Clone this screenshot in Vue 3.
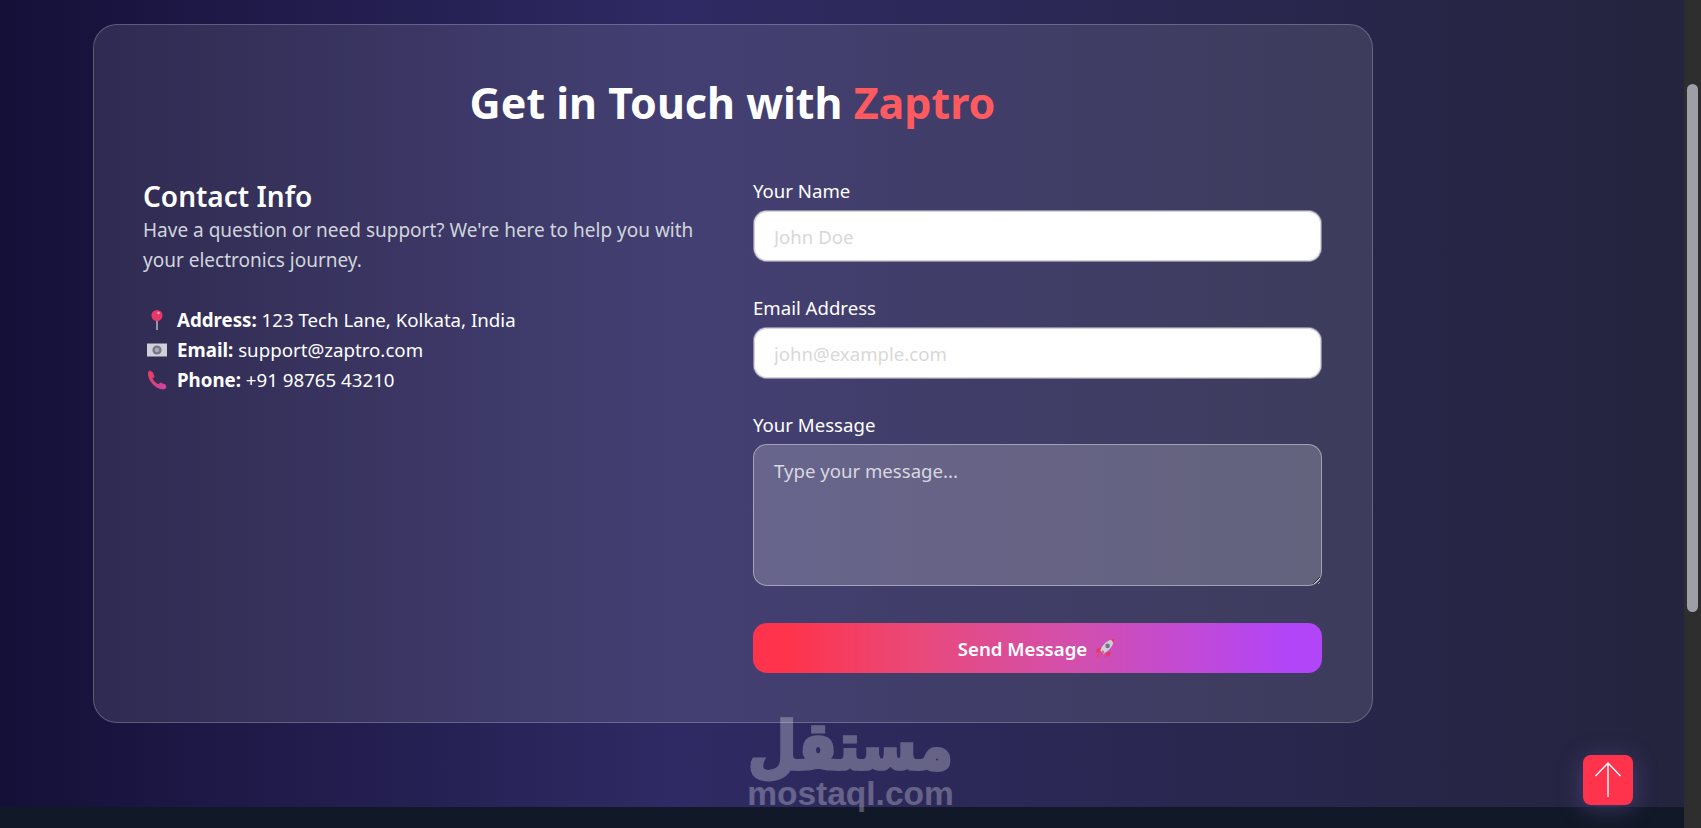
<template>
  <div class="page">
    <div class="main">
      <section class="contact">
        <div class="card">
          <h1 class="title">Get in Touch with <span class="brand">Zaptro</span></h1>
          <div class="columns">
            <div class="info">
              <h2>Contact Info</h2>
              <p class="lead">Have a question or need support? We're here to help you with your electronics journey.</p>
              <ul>
                <li>
                  <svg class="emoji" viewBox="0 0 20 20">
                    <path d="M10 9v11" stroke="#b9b9c6" stroke-width="1.500" />
                    <circle cx="10" cy="5.500" r="5.500" fill="#e8386a" />
                    <circle cx="11.500" cy="3" r="1.200" fill="#f7a3bb" />
                  </svg>
                  <span><b>Address:</b> 123 Tech Lane, Kolkata, India</span>
                </li>
                <li>
                  <svg class="emoji" viewBox="0 0 20 20">
                    <rect x="0" y="3.500" width="20" height="13" fill="#d0d0d8" />
                    <circle cx="10" cy="10" r="4.600" fill="#77778c" />
                    <circle cx="10" cy="10" r="2.300" fill="#a8a8b8" />
                  </svg>
                  <span><b>Email:</b> support@zaptro.com</span>
                </li>
                <li>
                  <svg class="emoji" viewBox="0 0 20 20">
                    <defs>
                      <linearGradient id="phone" x1="0" y1="0" x2="1" y2="1">
                        <stop offset="0" stop-color="#f03a5c" />
                        <stop offset="1" stop-color="#c945a6" />
                      </linearGradient>
                    </defs>
                    <path d="M2.500.500 6 2.500 7.500 7 5.500 8.500c1.300 2.600 3.300 4.500 6 5.700l1.700-1.700 5.300 2 1 2.500c-.5 1.500-1.700 2.500-3.500 2.500C9 19 1.500 11.500 1 4.500c-.1-1.700.4-3 1.500-4Z" fill="url(#phone)" />
                  </svg>
                  <span><b>Phone:</b> +91 98765 43210</span>
                </li>
              </ul>
            </div>
            <form class="form" @submit.prevent>
              <label for="name">Your Name</label>
              <input id="name" type="text" placeholder="John Doe" />
              <label for="email">Email Address</label>
              <input id="email" type="email" placeholder="john@example.com" />
              <label for="message">Your Message</label>
              <textarea id="message" placeholder="Type your message..."></textarea>
              <button type="submit" class="send">
                Send Message
                <svg class="rocket" viewBox="0 0 22 22">
                  <path d="M7 10 3 11l-1 4 5-1ZM12 15l-1 4 4-1 1-4Z" fill="#e8385f" />
                  <path d="M5 17l-3 3 1-4ZM6 18l-3 2 3-.5Z" fill="#f0475c" />
                  <path d="M6 13C8 7 13 3 19 2c0 6-4 11-10 14Z" fill="#cfcfd6" />
                  <path d="M16 2.500 19.500 1.500 19 6Z" fill="#e8385f" />
                  <circle cx="13" cy="8.500" r="2.200" fill="#75758f" />
                  <path d="M6 16l2-1-1 2ZM8 12.500l2 2-2 1Z" fill="#e8385f" />
                </svg>
              </button>
            </form>
          </div>
        </div>
      </section>
      <footer class="band"></footer>
      <div class="watermark">
        <span class="wm-ar" lang="ar" dir="rtl">مستقل</span>
        <span class="wm-en">mostaql.com</span>
      </div>
      <button class="to-top" aria-label="Back to top">
        <svg viewBox="0 0 50 50" width="50" height="50">
          <path d="M25 42V8M12.500 21 25 8l12.500 13" fill="none" stroke="#fff" stroke-width="1.400" />
        </svg>
      </button>
    </div>
    <div class="scrollbar">
      <div class="thumb"></div>
    </div>
  </div>
</template>

<script setup>
</script>

<style>
html, body {
  margin: 0;
  overflow: hidden;
}
</style>

<style scoped>
.page {
  display: flex;
  width: 1701px;
  height: 828px;
  overflow: hidden;
  font-family: "Noto Sans", "Open Sans", sans-serif;
  color: #fff;
}

.main {
  flex: 1;
  position: relative;
  display: flex;
  flex-direction: column;
  min-width: 0;
}

.contact {
  flex: 1;
  padding: 24px 0 0 93px;
  background: linear-gradient(to right, #151038, #2f2a63 40%, #24243e);
}

.card {
  box-sizing: border-box;
  width: 1280px;
  height: 699px;
  padding: 48px 50px 48px 49px;
  border: 1px solid rgba(255, 255, 255, 0.22);
  border-radius: 24px;
  background: rgba(255, 255, 255, 0.1);
}

.title {
  margin: 0 0 44px;
  font-size: 43px;
  line-height: 60px;
  font-weight: 700;
  text-align: center;
}

.brand {
  color: #ff5a5f;
}

.columns {
  display: grid;
  grid-template-columns: 1fr 569px;
  gap: 40px;
}

.info h2 {
  margin: 0;
  font-size: 28px;
  line-height: 38px;
  font-weight: 600;
}

.lead {
  margin: 0 0 30px;
  font-size: 19px;
  line-height: 30px;
  color: #d1d5db;
}

.info ul {
  margin: 0;
  padding: 0;
  list-style: none;
}

.info li {
  display: flex;
  align-items: center;
  font-size: 18.700px;
  line-height: 30px;
}

.emoji {
  width: 20px;
  height: 20px;
  margin: 0 10px 0 4px;
  flex: none;
}

.form {
  display: flex;
  flex-direction: column;
}

.form label {
  font-size: 18.600px;
  line-height: 27px;
  margin-bottom: 6px;
}

.form input,
.form textarea {
  display: block;
  box-sizing: border-box;
  width: 100%;
  padding: 13px 20px;
  border: 1px solid rgba(255, 255, 255, 0.4);
  border-radius: 14px;
  font: inherit;
  font-size: 18.600px;
  outline: none;
}

.form input {
  height: 52px;
  margin-bottom: 32px;
  background: #fff;
  background-clip: padding-box;
  box-shadow: inset 0 0 0 1px #d4d4dc;
  color: #111;
}

.form input::placeholder {
  color: #d8d8d8;
}

.form textarea {
  height: 142px;
  margin-bottom: 37px;
  background: rgba(255, 255, 255, 0.2);
  color: #fff;
}

.form textarea::placeholder {
  color: #d8d8e0;
}

.send {
  display: flex;
  align-items: center;
  justify-content: center;
  gap: 7px;
  height: 50px;
  border: 0;
  border-radius: 14px;
  background: linear-gradient(to right, #ff334b 6%, #e84a7c 30%, #d14fb0 58%, #b245f8 94%);
  color: #fff;
  font: inherit;
  font-size: 18.600px;
  font-weight: 600;
}

.rocket {
  width: 23px;
  height: 23px;
}

.band {
  flex: none;
  height: 21px;
  background: #111827;
}

.watermark {
  position: absolute;
  left: 745px;
  top: 711px;
  width: 211px;
  display: flex;
  flex-direction: column;
  align-items: center;
  color: #fff;
  opacity: 0.27;
  font-weight: 700;
  pointer-events: none;
}

.wm-ar {
  font-family: "DejaVu Sans", sans-serif;
  font-size: 56px;
  line-height: 66px;
  -webkit-text-stroke: 3px #fff;
  transform: translateY(3px) scaleY(1.180);
}

.wm-en {
  font-family: "Liberation Sans", sans-serif;
  font-size: 33.500px;
  line-height: 34px;
}

.to-top {
  position: absolute;
  left: 1583px;
  top: 755px;
  width: 50px;
  height: 50px;
  padding: 0;
  border: 0;
  border-radius: 8px;
  background: #ff334b;
  box-shadow: 0 4px 24px rgba(140, 110, 200, 0.35);
}

.to-top svg {
  display: block;
}

.scrollbar {
  flex: none;
  box-sizing: border-box;
  width: 17px;
  padding: 84px 3px 0;
  background: #2e2e2e;
}

.thumb {
  height: 528px;
  border-radius: 6px;
  background: #9e9ea8;
}
</style>
